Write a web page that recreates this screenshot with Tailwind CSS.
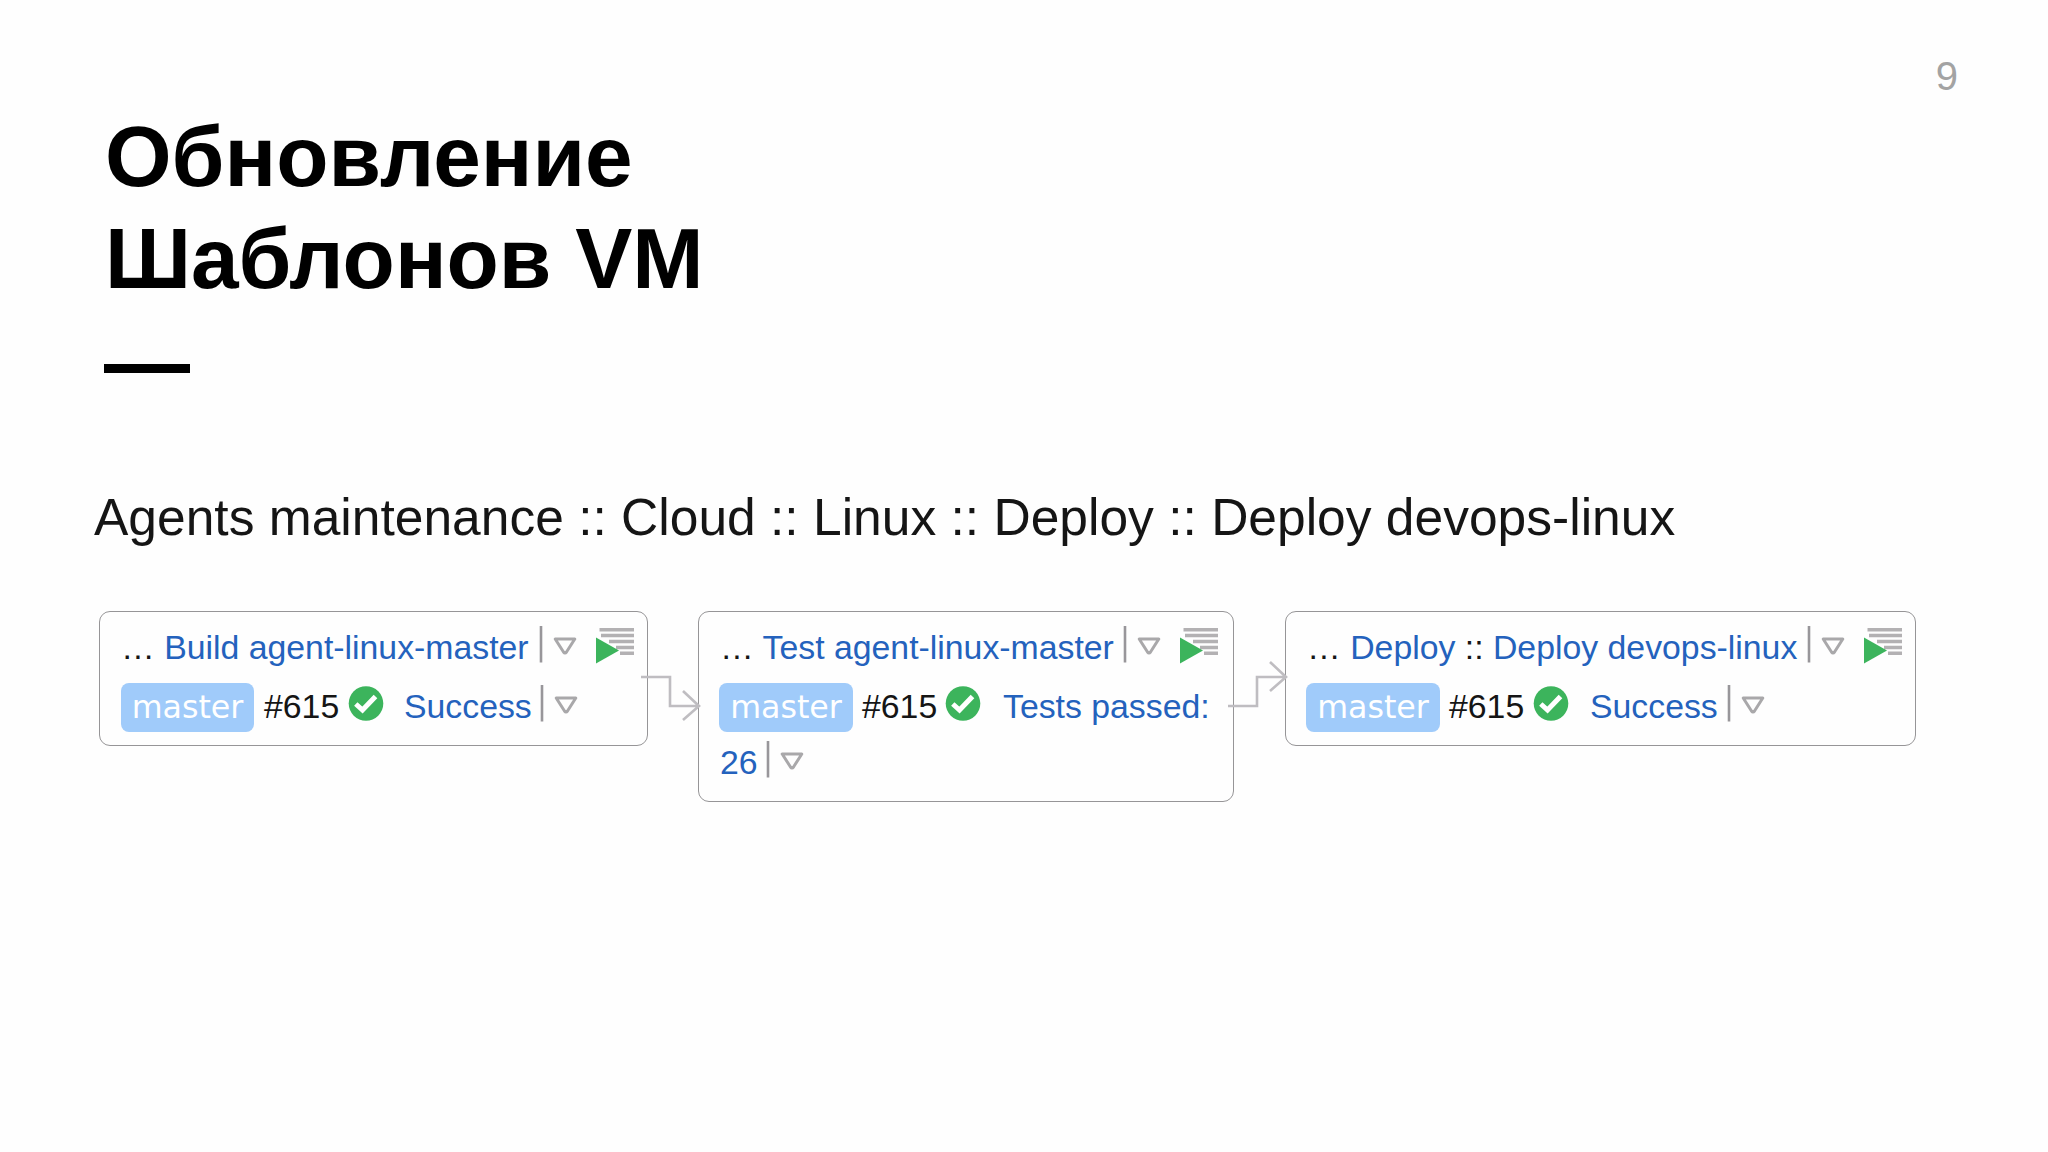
<!DOCTYPE html>
<html lang="ru">
<head>
    <meta charset="UTF-8">
    <meta name="viewport" content="width=device-width, initial-scale=1.0">
    <title>Обновление Шаблонов VM</title>
    <script src="https://cdn.jsdelivr.net/npm/@tailwindcss/browser@4"></script>
</head>
<body class="bg-[#fefefe] font-['Liberation_Sans',Arial,sans-serif]">
    <!-- Shared icons -->
    <svg class="hidden">
        <symbol id="menu" viewBox="0 0 40 44">
            <path d="M2 1V37.5" stroke="#98969a" stroke-width="2.6"/>
            <path d="M16.2 14H35.8L27.5 27Q26 29 24.500 27Z" fill="none" stroke="#a9a8aa" stroke-width="3" stroke-linejoin="round"/>
        </symbol>
        <symbol id="run" viewBox="0 0 40 44">
            <path d="M4.500 4.800H39M6 10.500H39M14 16.500H39M21 22.500H39M25 28.300H39" stroke="#b3b1b3" stroke-width="3.4"/>
            <path d="M1 12.500L24 25.500L1 38.500Z" fill="#3cb45c"/>
        </symbol>
        <symbol id="check" viewBox="0 0 36 44">
            <circle cx="18" cy="19.500" r="17.3" fill="#3cb45c"/>
            <path d="M7.800 20L14.500 26L27.500 12.500" fill="none" stroke="#fff" stroke-width="5"/>
        </symbol>
    </svg>

    <main class="relative w-[2048px] h-[1152px] overflow-hidden">
        <!-- Page number -->
        <div class="absolute right-[90px] top-[53px] text-[40px] leading-[46px] text-[#a3a3a3]">9</div>

        <h1 class="pt-[106px] pl-[105px] text-[85.6px] leading-[102.4px] font-bold text-black">Обновление<br>Шаблонов VM</h1>
        <div class="mt-[53px] ml-[104px] w-[86px] h-[9px] bg-black"></div>

        <h2 class="mt-[114px] pl-[94px] text-[51.54px] leading-[60px] text-[#151515] whitespace-nowrap">Agents maintenance :: Cloud :: Linux :: Deploy :: Deploy devops-linux</h2>

        <!-- Build chain -->
        <div class="mt-[64px] pl-[99px] flex items-start text-[33.8px] leading-[44px] text-[#151515] whitespace-nowrap">
            <!-- Build -->
            <section class="shrink-0 w-[549px] h-[135px] border border-[#969597] rounded-[11px] pt-[13px] pl-[21px]">
                <div class="flex h-[44px]">
                    <div class="w-[418px]">… <span class="text-[#2462bd]">Build agent-linux-master</span></div>
                    <svg class="w-[40px] h-[44px]"><use href="#menu"/></svg>
                    <svg class="ml-[16px] w-[40px] h-[44px]"><use href="#run"/></svg>
                </div>
                <div class="mt-[15px] flex h-[44px]">
                    <span class="-mt-[1px] w-[133px] h-[49px] rounded-[8px] bg-[#a0cbfa] text-center text-white text-[31.7px] leading-[48px] font-['DejaVu_Sans',sans-serif]">master</span>
                    <span class="ml-[10px] w-[84px]">#615</span>
                    <svg class="w-[36px] h-[44px]"><use href="#check"/></svg>
                    <span class="ml-[20px] w-[136px] text-[#2462bd]">Success</span>
                    <svg class="w-[40px] h-[44px]"><use href="#menu"/></svg>
                </div>
            </section>

            <svg class="relative shrink-0 w-[50px] h-[135px] overflow-visible" fill="none" stroke="#bfbdc1" stroke-width="2.6">
                <path d="M-7 66H22V95H51M35 80L51 95L35 109"/>
            </svg>

            <!-- Test -->
            <section class="shrink-0 w-[536px] h-[191px] border border-[#969597] rounded-[11px] pt-[13px] pl-[20px]">
                <div class="flex h-[44px]">
                    <div class="w-[404px] pl-[1px]">… <span class="text-[#2462bd]">Test agent-linux-master</span></div>
                    <svg class="w-[40px] h-[44px]"><use href="#menu"/></svg>
                    <svg class="ml-[16px] w-[40px] h-[44px]"><use href="#run"/></svg>
                </div>
                <div class="mt-[15px] flex h-[44px]">
                    <span class="-mt-[1px] w-[134px] h-[49px] rounded-[8px] bg-[#a0cbfa] text-center text-white text-[31.7px] leading-[48px] font-['DejaVu_Sans',sans-serif]">master</span>
                    <span class="ml-[9px] w-[83px]">#615</span>
                    <svg class="w-[36px] h-[44px]"><use href="#check"/></svg>
                    <span class="ml-[22px] text-[#2462bd]">Tests passed:</span>
                </div>
                <div class="mt-[12px] flex h-[44px]">
                    <span class="w-[47px] pl-[1px] text-[#2462bd]">26</span>
                    <svg class="w-[40px] h-[44px]"><use href="#menu"/></svg>
                </div>
            </section>

            <svg class="relative shrink-0 w-[51px] h-[135px] overflow-visible" fill="none" stroke="#bfbdc1" stroke-width="2.6">
                <path d="M-6 95H23V66H52M36 51L52 66L36 80"/>
            </svg>

            <!-- Deploy -->
            <section class="shrink-0 w-[631px] h-[135px] border border-[#969597] rounded-[11px] pt-[13px] pl-[20px]">
                <div class="flex h-[44px]">
                    <div class="w-[501px] pl-[1px]">… <span class="text-[#2462bd]">Deploy</span> :: <span class="text-[#2462bd]">Deploy devops-linux</span></div>
                    <svg class="w-[40px] h-[44px]"><use href="#menu"/></svg>
                    <svg class="ml-[16px] w-[40px] h-[44px]"><use href="#run"/></svg>
                </div>
                <div class="mt-[15px] flex h-[44px]">
                    <span class="-mt-[1px] w-[134px] h-[49px] rounded-[8px] bg-[#a0cbfa] text-center text-white text-[31.7px] leading-[48px] font-['DejaVu_Sans',sans-serif]">master</span>
                    <span class="ml-[9px] w-[84px]">#615</span>
                    <svg class="w-[36px] h-[44px]"><use href="#check"/></svg>
                    <span class="ml-[21px] w-[137px] text-[#2462bd]">Success</span>
                    <svg class="w-[40px] h-[44px]"><use href="#menu"/></svg>
                </div>
            </section>
        </div>
    </main>
</body>
</html>
